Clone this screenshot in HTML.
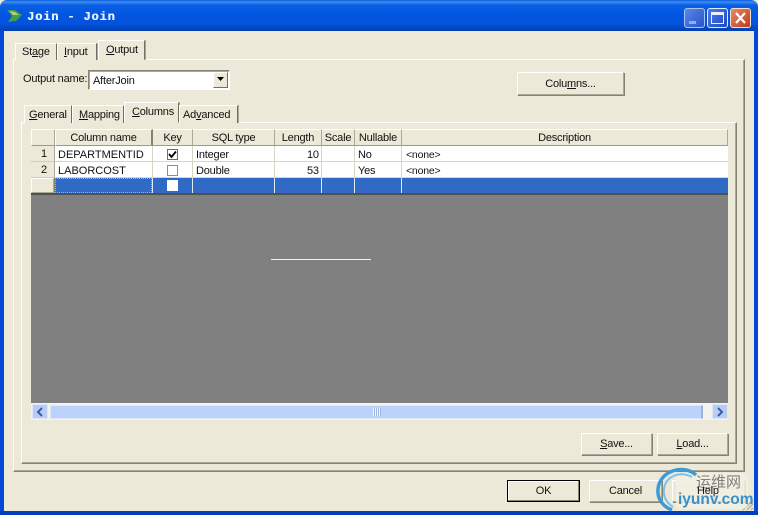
<!DOCTYPE html>
<html><head><meta charset="utf-8">
<style>
html,body{margin:0;padding:0;background:#ece9d8}
#w{position:relative;width:758px;height:515px;overflow:hidden;background:#ece9d8;font:11px "Liberation Sans",sans-serif;letter-spacing:-.2px;color:#111}
#w div{position:absolute;box-sizing:border-box;white-space:nowrap}
.t{line-height:14px}
u{text-decoration:underline}
.btn{background:#ece9d8;border:1px solid;border-color:#fff #aca899 #aca899 #fff;box-shadow:1px 1px 0 #85836f;text-align:center}
.hd{top:129px;height:17px;background:#ece9d8;border-right:1px solid #aca899;border-bottom:1px solid #9d9a8a;border-top:1px solid #fff;text-align:center;line-height:16px}
.tab{background:#ece9d8;border-top:1px solid #fff;border-left:1px solid #fff;border-right:1px solid #716f64;box-shadow:1px 0 0 #aca899;text-align:center}
.ln{background:#d8d5c6}
</style></head><body>
<div id="w">
<!-- frame -->
<div style="left:0;top:0;width:758px;height:31px;background:linear-gradient(#0a5ae0 0,#3d8ef0 2px,#0a5fe4 5px,#0355e0 16px,#0353dc 24px,#0346c0 29px,#033ea8 31px);border-radius:7px 7px 0 0"></div>
<div style="left:0;top:30px;width:4px;height:485px;background:#0448d8"></div>
<div style="left:754px;top:30px;width:4px;height:485px;background:#0448d8"></div>
<div style="left:0;top:511px;width:758px;height:4px;background:#0340b8"></div>
<!-- title -->
<svg style="position:absolute;left:7px;top:9px" width="16" height="14"><path d="M0 1L8 1L15 6L9 12L1 13L5 7Z" fill="#3fa048"/><path d="M2 2L8 3L12 6L6 6Z" fill="#b8d080"/></svg>
<div class="t" style="left:27px;top:10px;font:bold 12px/14px 'Liberation Mono',monospace;letter-spacing:.85px;color:#e8f2ff;text-shadow:.4px 0 0 #e8f2ff">Join - Join</div>
<!-- window btns -->
<div style="left:684px;top:8px;width:21px;height:20px;border:1px solid #a8c4f0;border-radius:3px;background:linear-gradient(135deg,#5a85e8,#2a55c8)"></div>
<div style="left:689px;top:21px;width:7px;height:3px;background:#8fb0ee"></div>
<div style="left:707px;top:8px;width:21px;height:20px;border:1px solid #e0ebff;border-radius:3px;background:linear-gradient(135deg,#4c7ce8,#1d48c0)"></div>
<div style="left:711px;top:12px;width:13px;height:12px;border:1px solid #e8f0ff;border-top:3px solid #e8f0ff"></div>
<div style="left:730px;top:8px;width:21px;height:20px;border:1px solid #f0e0d8;border-radius:3px;background:linear-gradient(135deg,#e88a68,#c03c18)"></div>
<svg style="position:absolute;left:734px;top:12px" width="13" height="12"><path d="M2 1L11 11M11 1L2 11" stroke="#fff" stroke-width="2.2"/></svg>
<!-- outer panel -->
<div style="left:13px;top:59px;width:732px;height:413px;border:1px solid;border-color:#fff #85836f #85836f #fff;box-shadow:inset -1px -1px 0 #aca899"></div>
<!-- outer tabs -->
<div class="tab t" style="left:15px;top:43px;width:42px;height:17px"><span style="position:absolute;left:6px;top:1px">St<u>a</u>ge</span></div>
<div class="tab t" style="left:57px;top:43px;width:40px;height:17px"><span style="position:absolute;left:6px;top:1px"><u>I</u>nput</span></div>
<div class="tab t" style="left:98px;top:40px;width:47px;height:20px;border-bottom:1px solid #ece9d8"><span style="position:absolute;left:7px;top:2px"><u>O</u>utput</span></div>
<!-- output name -->
<div class="t" style="left:23px;top:72px">Output name:</div>
<div class="t" style="left:88px;top:70px;width:142px;height:20px;background:#fff;border:1px solid;border-color:#85836f #fff #fff #85836f;box-shadow:inset 1px 1px 0 #aca899;padding:3px 0 0 4px">AfterJoin</div>
<div class="btn" style="left:213px;top:72px;width:15px;height:16px;box-shadow:none;border-color:#fff #716f64 #716f64 #fff"></div>
<svg style="position:absolute;left:217px;top:77px" width="8" height="5"><path d="M0 0H7L3.500 4Z" fill="#000"/></svg>
<!-- Columns button -->
<div class="btn t" style="left:517px;top:72px;width:107px;height:23px;line-height:23px">Colu<u>m</u>ns...</div>
<!-- inner panel -->
<div style="left:21px;top:122px;width:716px;height:342px;border:1px solid;border-color:#fff #85836f #85836f #fff;box-shadow:inset -1px -1px 0 #aca899"></div>
<!-- inner tabs -->
<div class="tab" style="left:24px;top:105px;width:48px;height:18px"><span style="position:absolute;left:4px;top:3px"><u>G</u>eneral</span></div>
<div class="tab" style="left:72px;top:105px;width:52px;height:18px"><span style="position:absolute;left:6px;top:3px"><u>M</u>apping</span></div>
<div class="tab" style="left:124px;top:102px;width:55px;height:21px;border-bottom:1px solid #ece9d8"><span style="position:absolute;left:7px;top:3px"><u>C</u>olumns</span></div>
<div class="tab" style="left:179px;top:105px;width:59px;height:18px"><span style="position:absolute;left:3px;top:3px">Ad<u>v</u>anced</span></div>
<!-- grid -->
<div style="left:31px;top:129px;width:697px;height:274px;background:#808080"></div>
<div class="hd" style="left:31px;width:24px;border-left:1px solid #fff"></div>
<div class="hd" style="left:55px;width:98px;border-right:2px solid #85836f;border-left:1px solid #fff">Column name</div>
<div class="hd" style="left:153px;width:40px">Key</div>
<div class="hd" style="left:193px;width:82px">SQL type</div>
<div class="hd" style="left:275px;width:47px">Length</div>
<div class="hd" style="left:322px;width:33px">Scale</div>
<div class="hd" style="left:355px;width:47px">Nullable</div>
<div class="hd" style="left:402px;width:326px">Description</div>
<!-- rows -->
<div style="left:31px;top:146px;width:24px;height:16px;background:#ece9d8;border-right:1px solid #aca899;border-bottom:1px solid #d0cdbe;padding-left:10px;line-height:17px">1</div>
<div style="left:31px;top:162px;width:24px;height:16px;background:#ece9d8;border-right:1px solid #aca899;border-bottom:1px solid #d0cdbe;padding-left:10px;line-height:17px">2</div>
<div class="btn" style="left:31px;top:178px;width:23px;height:15px"></div>
<div style="left:55px;top:146px;width:673px;height:32px;background:#fff"></div>
<div class="ln" style="left:55px;top:161px;width:673px;height:1px"></div>
<div class="ln" style="left:55px;top:177px;width:673px;height:1px"></div>
<div class="ln" style="left:152px;top:146px;width:1px;height:32px"></div>
<div class="ln" style="left:192px;top:146px;width:1px;height:32px"></div>
<div class="ln" style="left:274px;top:146px;width:1px;height:32px"></div>
<div class="ln" style="left:321px;top:146px;width:1px;height:32px"></div>
<div class="ln" style="left:354px;top:146px;width:1px;height:32px"></div>
<div class="ln" style="left:401px;top:146px;width:1px;height:32px"></div>
<div class="t" style="left:58px;top:148px;letter-spacing:0">DEPARTMENTID</div>
<div class="t" style="left:58px;top:164px;letter-spacing:0">LABORCOST</div>
<div class="t" style="left:196px;top:148px">Integer</div>
<div class="t" style="left:196px;top:164px">Double</div>
<div class="t" style="left:307px;top:148px">10</div>
<div class="t" style="left:307px;top:164px">53</div>
<div class="t" style="left:358px;top:148px">No</div>
<div class="t" style="left:358px;top:164px">Yes</div>
<div class="t" style="left:406px;top:148px;font-size:10.500px">&lt;none&gt;</div>
<div class="t" style="left:406px;top:164px;font-size:10.500px">&lt;none&gt;</div>
<div style="left:167px;top:149px;width:11px;height:11px;background:#fff;border:1px solid #6e6e6e"></div>
<svg style="position:absolute;left:168px;top:150px" width="9" height="9"><path d="M1 4L3.500 7L8 1.500" fill="none" stroke="#000" stroke-width="1.800"/></svg>
<div style="left:167px;top:165px;width:11px;height:11px;background:#fff;border:1px solid #8e8e8e"></div>
<!-- selected row -->
<div style="left:55px;top:178px;width:673px;height:16px;background:#316ac5"></div>
<div style="left:55px;top:178px;width:97px;height:15px;border:1px dotted #a8b4c0"></div>
<div style="left:152px;top:178px;width:1px;height:16px;background:#dfe8f5"></div>
<div style="left:192px;top:178px;width:1px;height:16px;background:#dfe8f5"></div>
<div style="left:274px;top:178px;width:1px;height:16px;background:#dfe8f5"></div>
<div style="left:321px;top:178px;width:1px;height:16px;background:#dfe8f5"></div>
<div style="left:354px;top:178px;width:1px;height:16px;background:#dfe8f5"></div>
<div style="left:401px;top:178px;width:1px;height:16px;background:#dfe8f5"></div>
<div style="left:167px;top:180px;width:11px;height:11px;background:#fff"></div>
<div style="left:31px;top:193px;width:697px;height:2px;background:#505050"></div>
<div style="left:271px;top:259px;width:100px;height:1px;background:#f0f0f0"></div>
<!-- scrollbar -->
<div style="left:31px;top:403px;width:697px;height:17px;background:#f3f3ee"></div>
<div style="left:32px;top:404px;width:16px;height:15px;background:#b9cdf3;border:1px solid #dfe8fb"></div>
<svg style="position:absolute;left:35px;top:407px" width="10" height="10"><path d="M7 1L3 5L7 9" fill="none" stroke="#3a5ca8" stroke-width="2"/></svg>
<div style="left:50px;top:405px;width:653px;height:14px;background:#bcd2fa;border:1px solid #dfe8fb;border-right:2px solid #9cb2e0"></div>
<div style="left:373px;top:408px;width:8px;height:8px;background:repeating-linear-gradient(90deg,#f4f7ff 0 1px,#9db2dc 1px 2px)"></div>
<div style="left:712px;top:404px;width:16px;height:15px;background:#b9cdf3;border:1px solid #dfe8fb"></div>
<svg style="position:absolute;left:715px;top:407px" width="10" height="10"><path d="M3 1L7 5L3 9" fill="none" stroke="#3a5ca8" stroke-width="2"/></svg>
<!-- save/load -->
<div class="btn t" style="left:581px;top:433px;width:71px;height:22px;line-height:21px"><u>S</u>ave...</div>
<div class="btn t" style="left:657px;top:433px;width:71px;height:22px;line-height:21px"><u>L</u>oad...</div>
<!-- bottom buttons -->
<div class="t" style="left:507px;top:480px;width:73px;height:22px;border:1px solid #000;box-shadow:inset -1px -1px 0 #85836f,inset 1px 1px 0 #fff;text-align:center;line-height:21px">OK</div>
<div class="btn t" style="left:589px;top:480px;width:73px;height:22px;line-height:21px">Cancel</div>
<div class="btn t" style="left:672px;top:480px;width:73px;height:22px"></div>
<!-- resize grip -->
<svg style="position:absolute;left:741px;top:497px" width="13" height="14"><path d="M12 3L2 13M12 7L6 13M12 11L10 13" stroke="#b8b5a4" stroke-width="1.500"/></svg>
<!-- watermark -->
<div style="left:676px;top:473px;width:72px;height:36px;background:#f2f0e4;opacity:.85;border-radius:6px"></div>
<svg style="position:absolute;left:654px;top:467px" width="50" height="44"><path d="M42 8C30 -3 6 3 4 22C3 33 10 40 18 43" fill="none" stroke="#3c9ad8" stroke-width="3.500"/><path d="M38 10C27 4 12 8 10 22C9 30 13 36 19 40" fill="none" stroke="#7cc0e8" stroke-width="2"/></svg>
<div class="t" style="left:696px;top:473px;font:15px/18px 'Noto Sans CJK SC',sans-serif;letter-spacing:0;color:#808080">运维网</div>
<div class="t" style="left:678px;top:491px;font:bold 15.500px/18px 'Liberation Sans',sans-serif;letter-spacing:0;color:#3a8fc8">iyunv.com</div>
<div class="t" style="left:697px;top:484px;color:#111">Help</div>
</div>
</body></html>
